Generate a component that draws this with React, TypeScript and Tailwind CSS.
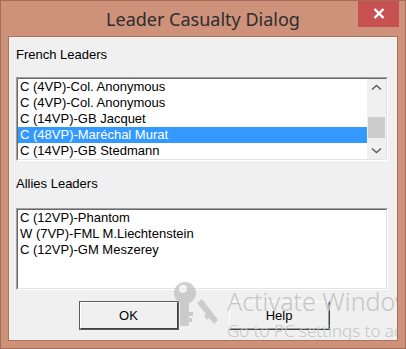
import React from "react";

const frenchLeaders = [
  { id: 1, name: "C (4VP)-Col. Anonymous" },
  { id: 2, name: "C (4VP)-Col. Anonymous" },
  { id: 3, name: "C (14VP)-GB Jacquet" },
  { id: 4, name: "C (48VP)-Maréchal Murat", selected: true },
  { id: 5, name: "C (14VP)-GB Stedmann" },
];

const alliesLeaders = [
  { id: 1, name: "C (12VP)-Phantom" },
  { id: 2, name: "W (7VP)-FML M.Liechtenstein" },
  { id: 3, name: "C (12VP)-GM Meszerey" },
];

const Chevron = ({ down }: { down?: boolean }) => (
  <svg width="11" height="7" viewBox="0 0 11 7">
    <path
      d={down ? "M1 1.5 L5.5 5.5 L10 1.5" : "M1 5.5 L5.5 1.5 L10 5.5"}
      fill="none"
      stroke="#606060"
      strokeWidth="1.6"
    />
  </svg>
);

const App = () => {
  return (
    <div className="w-[406px] h-[349px] bg-[#ce927a] border border-[#a46d5a] flex flex-col font-['Liberation_Sans',Arial,sans-serif] text-[13px] leading-4 text-black overflow-hidden">
      {/* title bar */}
      <div className="relative h-[35px] shrink-0 flex justify-center">
        <span className="mt-[6px] font-['Noto_Sans',sans-serif] text-[18px] leading-6 text-[#2d2d2d]">
          Leader Casualty Dialog
        </span>
        <div className="absolute right-[6px] -top-px w-[41px] h-[27px] bg-[#c75050] flex items-center justify-center">
          <svg width="12" height="11" viewBox="0 0 12 11">
            <path d="M1.5 1 L10.5 10 M10.5 1 L1.5 10" stroke="#fff" strokeWidth="2.4" />
          </svg>
        </div>
      </div>

      {/* client area */}
      <div className="relative mx-[7px] h-[305px] border border-[#a9735f] bg-[#f0f0f0] overflow-hidden">
        <div className="pl-[7px] pt-[10px]">French Leaders</div>
        <div className="mt-[14px] ml-[7px] w-[372px] h-[84px] border border-t-[#a0a0a0] border-l-[#a0a0a0] border-r-white border-b-white">
          <div className="h-full border border-t-[#696969] border-l-[#696969] border-r-[#e3e3e3] border-b-[#e3e3e3] bg-white flex">
            <div className="flex-1 flex flex-col">
              {frenchLeaders.map((item) => (
                <div
                  key={item.id}
                  className={`h-4 pl-[2px] whitespace-nowrap ${
                    item.selected ? "bg-[#3399ff] text-white" : ""
                  }`}
                >
                  {item.name}
                </div>
              ))}
            </div>
            <div className="w-[19px] bg-[#f0f0f0] flex flex-col">
              <div className="h-[17px] flex items-center justify-center">
                <Chevron />
              </div>
              <div className="h-[21px] mt-[21px] mx-px bg-[#cdcdcd]" />
              <div className="flex-1" />
              <div className="h-[17px] flex items-center justify-center">
                <Chevron down />
              </div>
            </div>
          </div>
        </div>

        <div className="pl-[7px] mt-[15px]">Allies Leaders</div>
        <div className="mt-[16px] ml-[7px] w-[372px] h-[82px] border border-t-[#a0a0a0] border-l-[#a0a0a0] border-r-white border-b-white">
          <div className="h-full border border-t-[#696969] border-l-[#696969] border-r-[#e3e3e3] border-b-[#e3e3e3] bg-white flex flex-col">
            {alliesLeaders.map((item) => (
              <div key={item.id} className="h-4 pl-[2px] whitespace-nowrap">
                {item.name}
              </div>
            ))}
          </div>
        </div>

        <div className="mt-[11px] flex justify-center gap-[50px] pl-[2px]">
          <div className="w-[100px] h-[29px] border border-[#5a5a5a]">
            <div className="h-full border border-t-white border-l-white border-r-[#404040] border-b-[#404040] flex items-center justify-center">
              OK
            </div>
          </div>
          <div className="w-[101px] h-[29px] border border-t-white border-l-white border-r-[#404040] border-b-[#404040]">
            <div className="h-full border border-t-[#f0f0f0] border-l-[#f0f0f0] border-r-[#a0a0a0] border-b-[#a0a0a0] flex items-center justify-center">
              Help
            </div>
          </div>
        </div>

        {/* activation watermark */}
        <div className="absolute left-[163px] top-[245px] pointer-events-none">
          <svg width="52" height="46" viewBox="0 0 52 46" className="opacity-60">
            <g fill="#b4b4b4">
              <path d="M30 17 L46 38 L42 42 L37 36 L35 38 L32 34 L34 32 L25 21 Z" />
              <circle cx="13" cy="11" r="11" />
              <rect x="8" y="18" width="9" height="26" rx="2" />
              <rect x="15" y="30" width="6" height="4" />
              <rect x="15" y="36" width="5" height="4" />
            </g>
            <circle cx="11" cy="7" r="4" fill="#f0f0f0" />
          </svg>
        </div>
        <div className="absolute left-[218px] top-[249px] whitespace-nowrap pointer-events-none font-['Noto_Sans',sans-serif] text-[#c6c6c6]">
          <div className="text-[25px] leading-[30px] font-light">Activate Windows</div>
          <div className="mt-[5px] text-[17px] leading-5 font-light">Go to PC settings to activate Windows.</div>
        </div>
      </div>
    </div>
  );
};

export default App;
